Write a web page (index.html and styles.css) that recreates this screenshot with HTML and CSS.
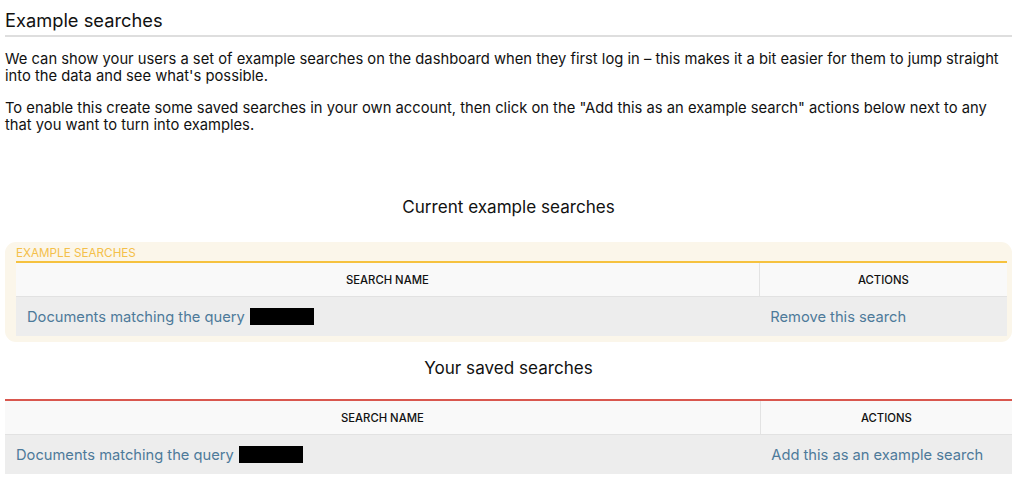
FILE: index.html
```html
<!DOCTYPE html>
<html>
<head>
<meta charset="utf-8">
<title>Example searches</title>
<link rel="stylesheet" href="styles.css">
</head>
<body>
<div class="page">
  <h1 class="page-title">Example searches</h1>
  <p class="intro">We can show your users a set of example searches on the dashboard when they first log in – this makes it a bit easier for them to jump straight into the data and see what's possible.</p>
  <p class="intro">To enable this create some saved searches in your own account, then click on the "Add this as an example search" actions below next to any that you want to turn into examples.</p>

  <h2 class="section-title first">Current example searches</h2>
  <div class="panel">
    <div class="panel-label">EXAMPLE SEARCHES</div>
    <table class="grid grid-yellow">
      <colgroup><col class="col-name"><col class="col-actions"></colgroup>
      <thead>
        <tr><th class="th-name">SEARCH NAME</th><th>ACTIONS</th></tr>
      </thead>
      <tbody>
        <tr>
          <td><a class="link" href="#">Documents matching the query '<span class="redact"></span></a></td>
          <td><a class="link" href="#">Remove this search</a></td>
        </tr>
      </tbody>
    </table>
  </div>

  <h2 class="section-title second">Your saved searches</h2>
  <table class="grid grid-red">
    <colgroup><col class="col-name"><col class="col-actions"></colgroup>
    <thead>
      <tr><th class="th-name">SEARCH NAME</th><th>ACTIONS</th></tr>
    </thead>
    <tbody>
      <tr>
        <td><a class="link" href="#">Documents matching the query '<span class="redact"></span></a></td>
        <td><a class="link" href="#">Add this as an example search</a></td>
      </tr>
    </tbody>
  </table>
</div>
</body>
</html>
```
FILE: styles.css
```css
html, body {
  margin: 0;
  padding: 0;
  background: #ffffff;
}
body {
  font-family: Inter, "DejaVu Sans", sans-serif;
  color: #1a1a1a;
}
.page {
  padding: 0 12px 0 5px;
}
.page-title {
  margin: 0;
  padding-top: 9px;
  padding-bottom: 4px;
  font-size: 18.3px;
  line-height: 22px;
  font-weight: 400;
  color: #111;
  border-bottom: 2px solid #dedede;
}
.intro {
  margin: 14px 0 15px;
  font-size: 14.75px;
  line-height: 17px;
  color: #111;
}
.section-title {
  margin: 0;
  text-align: center;
  font-size: 17.1px;
  line-height: 22px;
  font-weight: 400;
  color: #111;
}
.section-title.first {
  margin-top: 62px;
  margin-bottom: 24px;
}
.section-title.second {
  margin-top: 15px;
  margin-bottom: 20px;
}
.panel {
  background: #fbf6ea;
  border-radius: 11px;
  padding: 4px 5px 6px 11px;
}
.panel-label {
  font-size: 11.7px;
  line-height: 15px;
  color: #f4c04a;
}
.grid {
  width: 100%;
  border-collapse: collapse;
  table-layout: fixed;
}
.col-name {
  width: 75%;
}
.col-actions {
  width: 25%;
}
.grid-yellow {
  border-top: 2px solid #f6c23f;
}
.grid-red {
  border-top: 2px solid #d9574e;
}
.grid th {
  height: 33px;
  padding: 0 11px;
  background: #f9f9f9;
  border-bottom: 1px solid #e2e2e2;
  font-size: 11.3px;
  font-weight: 500;
  color: #111;
  text-align: center;
}
.grid th.th-name {
  border-right: 1px solid #e3e3e3;
}
.grid td {
  height: 39px;
  padding: 0 11px;
  background: #ededed;
  font-size: 14.7px;
  vertical-align: middle;
  white-space: nowrap;
}
.link {
  color: #4d7a9a;
  text-decoration: none;
}
.redact {
  display: inline-block;
  width: 64px;
  height: 17px;
  margin-left: -3px;
  vertical-align: -3px;
  background: #000;
}
```
